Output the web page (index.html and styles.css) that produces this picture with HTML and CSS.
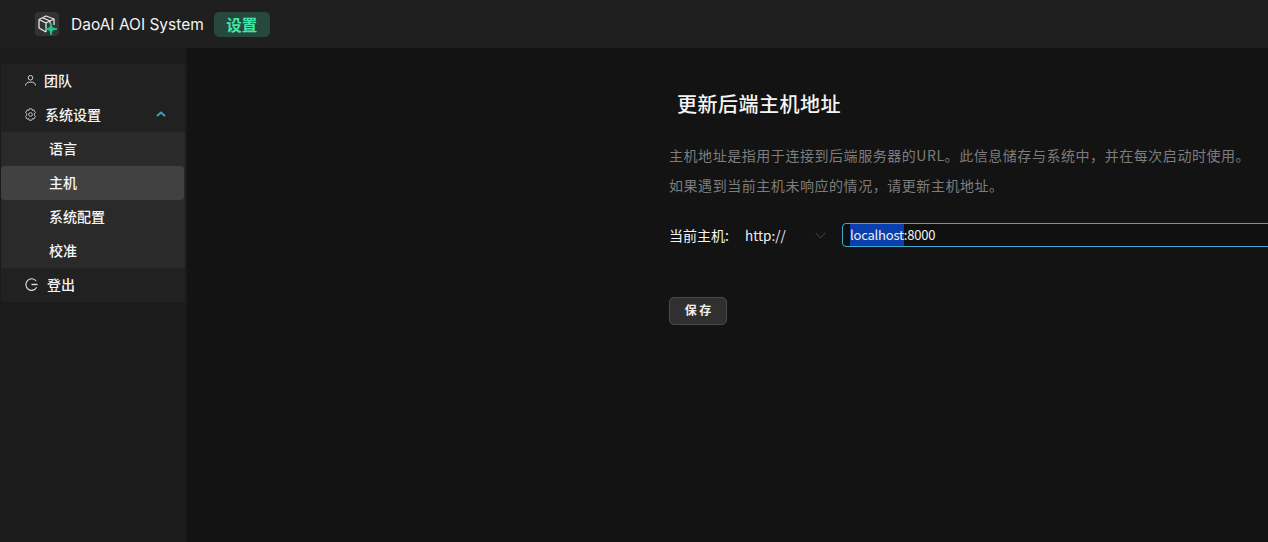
FILE: index.html
```html
<!DOCTYPE html>
<html lang="zh-CN">
<head>
<meta charset="utf-8">
<title>DaoAI AOI System</title>
<link rel="stylesheet" href="styles.css">
</head>
<body>
<header class="topbar">
  <span class="logo">
    <svg width="24" height="24" viewBox="0 0 24 24" fill="none" stroke="#e6e6e6" stroke-width="1.300" stroke-linejoin="round">
      <path d="M4 7.500 11 4 19 7V13M4 7.500V16l7 4M4 7.500l7 3.500V20M11 11l8-4M7.500 5.700l7.500 3.300V11.500"/>
      <path d="M16 11l1.200 4.800 4.800 1.200-4.800 1.200-1.200 4.800-1.200-4.800-4.800-1.200 4.800-1.200z" fill="#1fc98a" stroke="#1fc98a" stroke-width="1"/>
    </svg>
  </span>
  <span class="brand">DaoAI AOI System</span>
  <span class="tag">设置</span>
</header>
<div class="layout">
  <aside class="sidebar">
    <nav class="menu">
      <a class="item">
        <svg class="icon" viewBox="0 0 12 12" fill="none" stroke="#e0e0e0" stroke-width="1"><circle cx="6" cy="3" r="2.500"/><path d="M.6 11.500c0-2.800 2.300-3.800 5.400-3.800s5.400 1 5.400 3.800"/></svg>
        <span>团队</span>
      </a>
      <a class="item item-settings">
        <svg class="icon icon-gear" viewBox="0 0 12 14" fill="none" stroke="#d0d0d0" stroke-width="1" stroke-linejoin="round"><path d="M4.500.8h3l.5 1.700 1.700-.5 1.700 3-1.300 1.200v1.600l1.300 1.200-1.700 3-1.700-.5-.5 1.700h-3l-.5-1.700-1.700.5-1.700-3 1.300-1.200V6.200L.6 5l1.700-3 1.700.5z"/><circle cx="6" cy="7" r="2"/></svg>
        <span>系统设置</span>
        <svg class="chev" width="10" height="6" viewBox="0 0 10 6" fill="none" stroke="#3f9dc0" stroke-width="2"><path d="M1 5 5 1.500 9 5"/></svg>
      </a>
      <div class="submenu">
        <a class="sub">语言</a>
        <a class="sub active">主机</a>
        <a class="sub">系统配置</a>
        <a class="sub">校准</a>
      </div>
      <a class="item">
        <svg class="icon icon-logout" viewBox="0 0 14 14" fill="none" stroke="#e0e0e0" stroke-width="1.200"><path d="M12 3.200A6.200 6.200 0 1 0 12.600 10"/><path d="M7 7h6.500" stroke-width="1.500"/></svg>
        <span>登出</span>
      </a>
    </nav>
  </aside>
  <main class="content">
    <div class="panel">
      <h1 class="title">更新后端主机地址</h1>
      <p class="desc">主机地址是指用于连接到后端服务器的URL。此信息储存与系统中，并在每次启动时使用。</p>
      <p class="desc">如果遇到当前主机未响应的情况，请更新主机地址。</p>
      <div class="host-row">
        <span class="host-label">当前主机:</span>
        <div class="proto">
          <span>http://</span>
          <svg width="11" height="7" viewBox="0 0 11 7" fill="none" stroke="#4a4a4a" stroke-width="1"><path d="M.8.800 5.500 6 10.200.800"/></svg>
        </div>
        <div class="host-input"><span class="sel">localhost</span>:8000</div>
      </div>
      <button class="save">保 存</button>
    </div>
  </main>
</div>
</body>
</html>
```
FILE: styles.css
```css
* { box-sizing: border-box; }
html, body { margin: 0; height: 100%; overflow: hidden; }
body {
  background: #131313;
  color: #fff;
  font-family: "Noto Sans CJK SC", sans-serif;
  font-size: 14px;
  display: flex;
  flex-direction: column;
}
.topbar {
  height: 48px;
  flex: none;
  background: #1f1f1f;
  display: flex;
  align-items: center;
  padding-left: 35px;
}
.logo {
  width: 24px;
  height: 24px;
  background: #333;
  border-radius: 4px;
  display: flex;
}
.brand {
  margin-left: 12px;
  font-family: Inter, "Noto Sans", sans-serif;
  font-size: 15.500px;
  color: #f2f2f2;
}
.tag {
  margin-left: 10px;
  width: 56px;
  height: 25px;
  border-radius: 5px;
  background: #27483f;
  color: #43e6aa;
  font-weight: 700;
  font-size: 15.500px;
  display: flex;
  align-items: center;
  justify-content: center;
}
.layout { flex: 1; display: flex; min-height: 0; }
.sidebar {
  width: 187px;
  flex: none;
  background: #1b1b1b;
  padding: 16px 2px 0 1px;
}
.menu { background: #212121; border-radius: 2px; }
.item {
  height: 34px;
  display: flex;
  align-items: center;
  padding: 0 0 2px 24px;
  font-weight: 500;
  color: #f5f5f5;
}
.icon { width: 11px; height: 11px; flex: none; margin-right: 8px; }
.icon-gear { width: 11px; height: 13px; margin-right: 9px; }
.icon-logout { width: 13px; height: 13px; margin-right: 9px; }
.chev { margin-left: auto; margin-right: 19px; }
.submenu { background: #2a2a2a; }
.sub {
  height: 34px;
  display: flex;
  align-items: center;
  padding: 0 0 2px 48px;
  font-weight: 500;
  color: #f5f5f5;
}
.active { background: #414141; border-radius: 4px; margin-right: 1px; }
.content { flex: 1; padding-left: 482px; min-width: 0; overflow: hidden; }
.panel { width: 900px; padding-top: 41px; }
.title {
  margin: 0 0 21px 8px;
  font-size: 20px;
  line-height: 30px;
  font-weight: 500;
  letter-spacing: .5px;
  color: #f5f5f5;
}
.desc {
  margin: 0;
  line-height: 30px;
  color: #7d7d7d;
  font-size: 14px;
  letter-spacing: .55px;
}
.host-row { display: flex; align-items: center; height: 24px; margin-top: 23px; }
.host-label { width: 76px; font-weight: 400; font-size: 14px; color: #f5f5f5; }
.proto {
  width: 97px;
  display: flex;
  align-items: center;
  justify-content: space-between;
  padding-right: 16px;
  color: #f0f0f0;
  font-size: 13.500px;
}
.host-input {
  flex: 1;
  height: 24px;
  border: 1px solid #3fa9d0;
  border-radius: 4px;
  background: #0f0f0f;
  padding-left: 7px;
  line-height: 22px;
  font-size: 13px;
  letter-spacing: -.2px;
  color: #f0f0f0;
}
.sel { background: #0a3fae; display: inline-block; height: 22px; }
.save {
  display: block;
  margin-top: 50px;
  width: 58px;
  height: 28px;
  border: 1px solid #4a4a4a;
  border-radius: 5px;
  background: #303030;
  color: #f0f0f0;
  font-family: "Noto Sans CJK SC", sans-serif;
  font-size: 12px;
  font-weight: 700;
  padding: 0 0 4px;
}
```
